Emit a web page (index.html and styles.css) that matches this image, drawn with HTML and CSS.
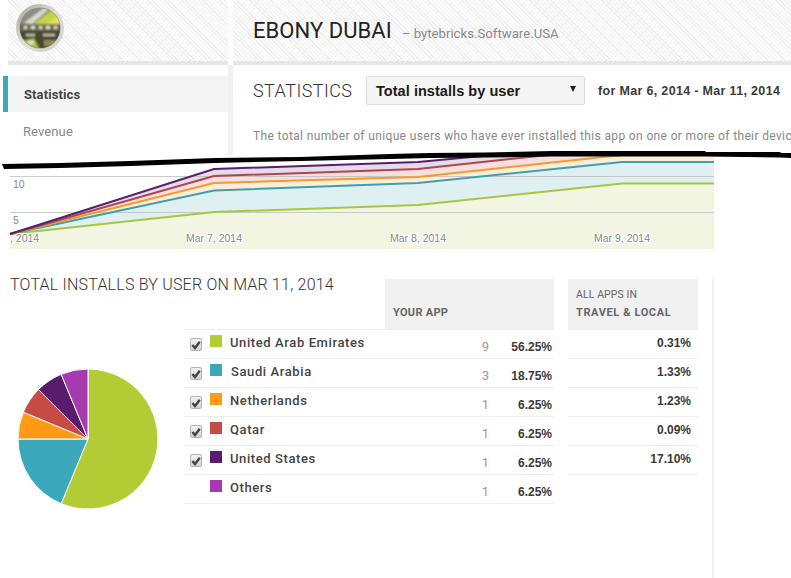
FILE: index.html
```html
<!DOCTYPE html>
<html lang="en">
<head>
<meta charset="utf-8">
<title>Ebony Dubai statistics</title>
<link rel="stylesheet" href="styles.css">
</head>
<body>
<svg class="defs" width="0" height="0">
  <symbol id="tick" viewBox="0 0 12 12"><path d="M2.4 6 L5 9 L9.8 2.8" fill="none" stroke="#444" stroke-width="2.4"/></symbol>
</svg>
<div class="page">
  <section class="top">
    <aside class="side">
      <div class="hatch side-head">
        <svg class="logo" width="48" height="48" viewBox="0 0 48 48">
          <defs>
            <clipPath id="logoClip"><circle cx="24" cy="24" r="20"/></clipPath>
            <linearGradient id="ring" x1="0" y1="0" x2="1" y2="1">
              <stop offset="0" stop-color="#a5a49a"/>
              <stop offset=".5" stop-color="#e0dfd8"/>
              <stop offset="1" stop-color="#cfcec5"/>
            </linearGradient>
            <filter id="soft" x="-5%" y="-5%" width="110%" height="110%"><feGaussianBlur stdDeviation=".8"/></filter>
          </defs>
          <circle cx="24" cy="24" r="24" fill="url(#ring)"/>
          <circle cx="24" cy="24" r="20.5" fill="#8a897d"/>
          <g clip-path="url(#logoClip)">
            <g filter="url(#soft)">
              <rect width="48" height="48" fill="#4c4b34"/>
              <path d="M3 3 H45 V20 H3Z" fill="#8c8e7e"/>
              <path d="M8 19 L28 4 L33 5 L16 20Z" fill="#d9dbd2"/>
              <path d="M18 20 L36 6 L46 12 V21Z" fill="#c8d33f"/>
              <path d="M30 20 L42 12 L46 21Z" fill="#dde25e"/>
              <rect x="3" y="20" width="42" height="7" fill="#6b6a4d"/>
              <path d="M8 22h3v3h-3zM15 22h4v3h-4zM23 22h3v3h-3zM30 22h4v3h-4zM38 22h3v3h-3z" fill="#e4e3d6"/>
              <path d="M3 27 H45 V46 H3Z" fill="#47462f"/>
              <path d="M10 30h9v2h-9zM27 30h12v2h-12z" fill="#c9c8ba"/>
              <path d="M5 37 L18 34 L24 46 H8Z" fill="#a8bb38"/>
              <path d="M12 37h6v3h-6z" fill="#e6e6da"/>
              <path d="M28 36h12v6h-12z" fill="#8f8b5a"/>
            </g>
          </g>
        </svg>
      </div>
      <nav class="nav">
        <a class="nav-item is-active">Statistics</a>
        <a class="nav-item">Revenue</a>
      </nav>
    </aside>
    <main class="main">
      <header class="hatch main-head">
        <h1 class="app-name">EBONY DUBAI</h1>
        <span class="app-dev">– bytebricks.Software.USA</span>
      </header>
      <div class="stats-bar">
        <h2 class="stats-title">STATISTICS</h2>
        <div class="select"><span>Total installs by user</span><i class="caret"></i></div>
        <span class="range">for Mar 6, 2014 - Mar 11, 2014</span>
      </div>
      <p class="desc">The total number of unique users who have ever installed this app on one or more of their devices.</p>
    </main>
  </section>

  <svg class="chart" width="791" height="95" viewBox="0 155 791 95">
    <rect x="10" y="155" width="704" height="94" fill="#f2f5e1"/>
    <path d="M10 234 L214 212 L418 205 L622 183.5 L714 183.5 V155 H10Z" fill="#dff0f3"/>
    <path d="M10 234 L214 190.5 L418 183 L622 162 L714 162 V155 H10Z" fill="#fdeedb"/>
    <path d="M10 234 L214 183 L418 177 L622 155 L714 155 H10Z" fill="#f6e0df"/>
    <path d="M10 234 L214 176 L418 169 L560 155 H10Z" fill="#e6dbe9"/>
    <path d="M10 234 L10 155 H480 L418 162 L214 169Z" fill="#fff"/>
    <path d="M10 176.5 H714 M10 212.5 H714" stroke="#bdbdbd" stroke-width="1" fill="none" opacity=".8"/>
    <g fill="none" stroke-width="2">
      <path d="M10 234 L214 212 L418 205 L622 183.5 L714 183.5" stroke="#a9c63f"/>
      <path d="M10 234 L214 190.5 L418 183 L622 162 L714 162" stroke="#3fa0ad"/>
      <path d="M10 234 L214 183 L418 177 L622 155" stroke="#f29a2e"/>
      <path d="M10 234 L214 176 L418 169 L622 147" stroke="#ab4651"/>
      <path d="M10 234 L214 169 L418 162 L622 143" stroke="#57206f"/>
    </g>
    <g class="chart-label">
      <text x="13" y="188">10</text>
      <text x="13" y="224">5</text>
      <text x="10" y="242">, 2014</text>
      <text x="186" y="242">Mar 7, 2014</text>
      <text x="390" y="242">Mar 8, 2014</text>
      <text x="594" y="242">Mar 9, 2014</text>
    </g>
  </svg>

  <section class="bottom">
    <div class="pie-col">
      <h2 class="pie-title">TOTAL INSTALLS BY USER ON MAR 11, 2014</h2>
      <svg class="pie" width="142" height="142" viewBox="17 368 142 142">
        <g stroke="#fff" stroke-width="1">
          <path d="M88 439 V369 A70 70 0 1 1 61.2 503.7Z" fill="#b3cc36"/>
          <path d="M88 439 L61.2 503.7 A70 70 0 0 1 18 439Z" fill="#3ba9bb"/>
          <path d="M88 439 H18 A70 70 0 0 1 23.3 412.2Z" fill="#ff9a16"/>
          <path d="M88 439 L23.3 412.2 A70 70 0 0 1 38.5 389.5Z" fill="#c64b44"/>
          <path d="M88 439 L38.5 389.5 A70 70 0 0 1 61.2 374.3Z" fill="#571c6e"/>
          <path d="M88 439 L61.2 374.3 A70 70 0 0 1 88 369Z" fill="#a83ab0"/>
        </g>
      </svg>
    </div>
    <div class="app-col">
      <div class="head-cell app-head"><b>YOUR APP</b></div>
      <div class="row">
        <span class="check"><svg width="12" height="12"><use href="#tick"/></svg></span>
        <span class="swatch c-green"></span><span class="name">United Arab Emirates</span>
        <span class="count">9</span><span class="pct">56.25%</span>
      </div>
      <div class="row">
        <span class="check"><svg width="12" height="12"><use href="#tick"/></svg></span>
        <span class="swatch c-teal"></span><span class="name name-shift">Saudi Arabia</span>
        <span class="count">3</span><span class="pct">18.75%</span>
      </div>
      <div class="row">
        <span class="check"><svg width="12" height="12"><use href="#tick"/></svg></span>
        <span class="swatch c-orange"></span><span class="name">Netherlands</span>
        <span class="count">1</span><span class="pct">6.25%</span>
      </div>
      <div class="row">
        <span class="check"><svg width="12" height="12"><use href="#tick"/></svg></span>
        <span class="swatch c-red"></span><span class="name">Qatar</span>
        <span class="count">1</span><span class="pct">6.25%</span>
      </div>
      <div class="row">
        <span class="check"><svg width="12" height="12"><use href="#tick"/></svg></span>
        <span class="swatch c-purple"></span><span class="name">United States</span>
        <span class="count">1</span><span class="pct">6.25%</span>
      </div>
      <div class="row">
        <span class="check check-none"></span>
        <span class="swatch c-violet"></span><span class="name">Others</span>
        <span class="count">1</span><span class="pct">6.25%</span>
      </div>
    </div>
    <div class="all-col">
      <div class="head-cell all-head"><span>ALL APPS IN</span><b class="all-cat">TRAVEL &amp; LOCAL</b></div>
      <div class="row all-row">0.31%</div>
      <div class="row all-row">1.33%</div>
      <div class="row all-row">1.23%</div>
      <div class="row all-row">0.09%</div>
      <div class="row all-row">17.10%</div>
    </div>
    <div class="rule-col"></div>
  </section>

  <svg class="scribble" width="791" height="30" viewBox="0 145 791 30">
    <path d="M2 164 L60 163 L130 161 L215 158 L300 157 L390 154 L430 153 L485 152.5 L552 151 L705 151 L706 152 L780 152 L781 153 L791 153 V158 L780 157.5 L706 156.5 L552 156.5 L485 157.5 L430 158 L390 159 L300 161 L215 163 L130 166 L60 168 L4 169 Z" fill="#000"/>
  </svg>
</div>
</body>
</html>
```

FILE: styles.css
```css
* { box-sizing: border-box; }
html, body { margin: 0; padding: 0; background: #fff; }
body { font-family: Roboto, "Liberation Sans", sans-serif; color: #333; }
.defs { position: absolute; }
.page { position: relative; width: 791px; height: 578px; overflow: hidden; }

.hatch {
  background:
    linear-gradient(to top, #e6e6e6 4px, transparent 4px) no-repeat,
    repeating-linear-gradient(45deg, #ececec 0 1px, #fff 1px 3px);
  height: 65px;
}
.top { display: flex; height: 155px; }
.side { width: 233px; flex: none; }
.side-head { margin-left: 8px; width: 220px; padding: 4px 0 0 8px; }
.logo { display: block; }
.nav { display: flex; flex-direction: column; height: 90px; padding: 11px 0 0 3px; background: linear-gradient(#f1f1f1, #f1f1f1) no-repeat 228px 0 / 5px 100%; }
.nav-item { display: flex; align-items: center; width: 225px; height: 36px; padding-left: 16px; font-size: 13px; color: #888; letter-spacing: .1px; }
.nav-item.is-active { background: #f4f4f4; border-left: 5px solid #3ba9bb; font-weight: 700; color: #444; }
.nav-item + .nav-item { padding-left: 20px; margin-top: 1px; }

.main { flex: 1; min-width: 0; white-space: nowrap; }
.main-head { display: flex; align-items: baseline; padding: 18px 0 0 20px; }
.app-name { margin: 0; font-size: 22px; line-height: 26px; font-weight: 400; color: #222; letter-spacing: .05px; }
.app-dev { margin-left: 10px; font-size: 13.2px; color: #888; }
.stats-bar { display: flex; align-items: center; height: 29px; margin: 11px 0 0 20px; }
.stats-title { margin: 0; width: 113px; font-size: 18px; font-weight: 300; color: #333; letter-spacing: .45px; }
.select { display: flex; align-items: center; justify-content: space-between; width: 219px; height: 29px; padding: 0 8px 0 9px; background: #f5f5f5; border: 1px solid #ddd; border-radius: 2px; font-family: "Liberation Sans", sans-serif; font-size: 14.5px; font-weight: 700; color: #1a1a1a; letter-spacing: .05px; }
.caret { width: 0; height: 0; border-left: 3px solid transparent; border-right: 3px solid transparent; border-top: 6px solid #222; margin-bottom: 3px; }
.range { margin-left: 13px; font-family: "Liberation Sans", sans-serif; font-size: 12.5px; font-weight: 700; color: #3a3a3a; letter-spacing: .33px; }
.desc { margin: 24px 0 0 20px; font-size: 12px; line-height: 14px; color: #888; letter-spacing: .36px; }

.chart { display: block; }
.chart-label text { font-family: "Liberation Sans", sans-serif; font-size: 10.5px; fill: #888; stroke: #fff; stroke-width: 2px; paint-order: stroke; }

.bottom { display: flex; align-items: flex-start; height: 328px; padding-top: 29px; }
.pie-col { width: 184px; flex: none; padding-left: 10px; }
.pie-title { margin: -4px 0 0; font-size: 16px; line-height: 20px; font-weight: 300; color: #333; white-space: nowrap; letter-spacing: .21px; }
.pie { display: block; margin: 73px 0 0 7px; }

.app-col { width: 370px; flex: none; }
.head-cell { height: 50px; background: #f1f1f1; font-size: 10.5px; color: #666; }
.head-cell b { font-weight: 700; font-size: 11px; letter-spacing: .3px; }
.head-cell .all-cat { letter-spacing: .62px; }
.app-head { margin-left: 201px; padding: 27px 0 0 8px; line-height: 13px; }
.row { display: flex; align-items: flex-start; height: 29px; border-top: 1px solid #eee; }
.app-col .row:last-child { height: 30px; border-bottom: 1px solid #eee; }
.check { flex: none; width: 12px; height: 13px; margin: 8px 0 0 6px; background: linear-gradient(#f2f2f2, #d2d2d2); border: 1px solid #b4b4b4; border-radius: 2px; display: flex; align-items: center; justify-content: center; }
.check svg { flex: none; display: block; margin: -1px; }
.check-none { visibility: hidden; }
.swatch { flex: none; width: 12px; height: 12px; margin: 5px 0 0 8px; }
.c-green { background: #b3cc36; }
.c-teal { background: #3ba9bb; }
.c-orange { background: #ff9a16; }
.c-red { background: #c64b44; }
.c-purple { background: #571c6e; }
.c-violet { background: #a83ab0; }
.name { flex: 1; margin: 5px 0 0 8px; font-size: 13px; line-height: 16px; font-weight: 500; color: #444; letter-spacing: .6px; }
.name-shift { padding-left: 1px; }
.count { margin-top: 9px; width: 60px; margin-left: -60px; text-align: right; font-size: 13px; line-height: 15px; color: #999; }
.pct { flex: none; width: 65px; margin-top: 10px; padding-right: 2px; text-align: right; font-family: "Liberation Sans", sans-serif; font-size: 12px; line-height: 15px; font-weight: 700; color: #3a3a3a; }

.all-col { width: 130px; flex: none; margin-left: 14px; }
.all-head { display: flex; flex-direction: column; gap: 5px; padding: 9px 0 0 8px; line-height: 13px; letter-spacing: .1px; }
.all-row { justify-content: flex-end; padding: 6px 7px 0 0; font-family: "Liberation Sans", sans-serif; font-size: 12px; line-height: 15px; font-weight: 700; color: #3a3a3a; }
.all-col .all-row:last-child { height: 30px; border-bottom: 1px solid #eee; }
.rule-col { flex: none; width: 2px; height: 299px; margin-left: 14px; background: #f1f1f1; }

.scribble { position: absolute; left: 0; top: 145px; }
```
